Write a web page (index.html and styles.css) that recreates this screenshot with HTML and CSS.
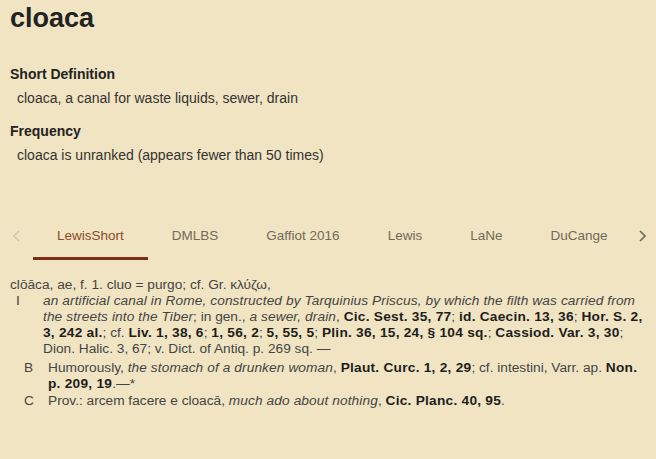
FILE: index.html
```html
<!DOCTYPE html>
<html lang="en">
<head>
<meta charset="utf-8">
<link rel="stylesheet" href="styles.css">
</head>
<body>
<main class="page">
  <h1 class="lemma">cloaca</h1>
  <section class="summary">
    <h2 class="summary-title">Short Definition</h2>
    <p class="summary-text">cloaca, a canal for waste liquids, sewer, drain</p>
    <h2 class="summary-title">Frequency</h2>
    <p class="summary-text">cloaca is unranked (appears fewer than 50 times)</p>
  </section>
  <nav class="tabs">
    <span class="tab-arrow tab-arrow-prev tab-arrow-disabled">
      <svg width="7" height="12" viewBox="0 0 7 12"><path d="M6 1 1 6l5 5" fill="none" stroke="currentColor" stroke-width="1.6"/></svg>
    </span>
    <div class="tab-list">
      <span class="tab tab-active">LewisShort</span>
      <span class="tab">DMLBS</span>
      <span class="tab">Gaffiot 2016</span>
      <span class="tab">Lewis</span>
      <span class="tab">LaNe</span>
      <span class="tab">DuCange</span>
    </div>
    <span class="tab-arrow tab-arrow-next">
      <svg width="7" height="12" viewBox="0 0 7 12"><path d="M1 1l5 5-5 5" fill="none" stroke="currentColor" stroke-width="1.6"/></svg>
    </span>
  </nav>
  <article class="entry">
    <div class="entry-head">clōāca, ae, f. 1. cluo = purgo; cf. Gr. κλύζω,</div>
    <div class="sense sense-1">
      <span class="sense-label">I</span>
      <div class="sense-body"><i>an artificial canal in Rome, constructed by Tarquinius Priscus, by which the filth was carried from the streets into the Tiber</i>; in gen., <i>a sewer, drain</i>, <b>Cic. Sest. 35, 77</b>; <b>id. Caecin. 13, 36</b>; <b>Hor. S. 2, 3, 242 al.</b>; cf. <b>Liv. 1, 38, 6</b>; <b>1, 56, 2</b>; <b>5, 55, 5</b>; <b>Plin. 36, 15, 24, § 104 sq.</b>; <b>Cassiod. Var. 3, 30</b>; Dion.&nbsp;Halic.&nbsp;3,&nbsp;67; v. Dict. of Antiq. p. 269 sq. —</div>
    </div>
    <div class="sense sense-2 sense-b">
      <span class="sense-label">B</span>
      <div class="sense-body">Humorously, <i>the stomach of a drunken woman</i>, <b>Plaut. Curc. 1, 2, 29</b>; cf. intestini, Varr. ap. <b>Non. p. 209, 19</b>.—*</div>
    </div>
    <div class="sense sense-2 sense-c">
      <span class="sense-label">C</span>
      <div class="sense-body">Prov.: arcem facere e cloacā, <i>much ado about nothing</i>, <b>Cic. Planc. 40, 95</b>.</div>
    </div>
  </article>
</main>
</body>
</html>
```

FILE: styles.css
```css
html, body {
  margin: 0;
  padding: 0;
  background: #f0e4c2;
}
body {
  font-family: "Liberation Sans", Arial, sans-serif;
  color: #333;
}
.page {
  padding: 0 0 0 10px;
}
.lemma {
  margin: 0;
  padding-top: 3px;
  font-size: 27px;
  line-height: 30px;
  font-weight: bold;
  color: #222;
}
.summary {
  padding-top: 32px;
}
.summary-title {
  margin: 0;
  font-size: 14px;
  line-height: 18px;
  font-weight: bold;
  color: #222;
}
.summary-text {
  margin: 6px 0 15px 7px;
  font-size: 14px;
  line-height: 18px;
  color: #333;
}
.tabs {
  display: flex;
  align-items: stretch;
  margin: 50px 0 0 -10px;
  height: 46px;
}
.tab-arrow {
  width: 33px;
  flex: none;
  display: flex;
  align-items: center;
  justify-content: center;
  color: #6e6a60;
  padding-bottom: 3px;
  box-sizing: border-box;
}
.tab-arrow-next {
  padding-left: 5px;
}
.tab-arrow-disabled {
  color: #cfc7b0;
}
.tab-list {
  flex: 1;
  display: flex;
  overflow: hidden;
}
.tab {
  flex: none;
  white-space: nowrap;
  padding: 0 24px;
  display: flex;
  align-items: center;
  font-size: 13.5px;
  color: #726a58;
  border-bottom: 3px solid transparent;
}
.tab-active {
  color: #8a4b2c;
  border-bottom-color: #7c2f14;
}
.entry {
  padding-top: 17px;
  padding-right: 8px;
  font-size: 13.7px;
  line-height: 16px;
  color: #444;
}
.entry b {
  color: #1e1e1e;
  letter-spacing: 0.25px;
}
.entry i {
  color: #444;
  letter-spacing: 0.1px;
}
.sense {
  display: flex;
}
.sense-label {
  flex: none;
}
.sense-1 {
  padding-left: 6px;
}
.sense-1 .sense-label {
  width: 27px;
}
.sense-2 {
  padding-left: 14px;
}
.sense-2 .sense-label {
  width: 24px;
}
.sense-b {
  margin-top: 3px;
}
.sense-c {
  margin-top: 1px;
}
.sense-body {
  flex: 1;
}
```
